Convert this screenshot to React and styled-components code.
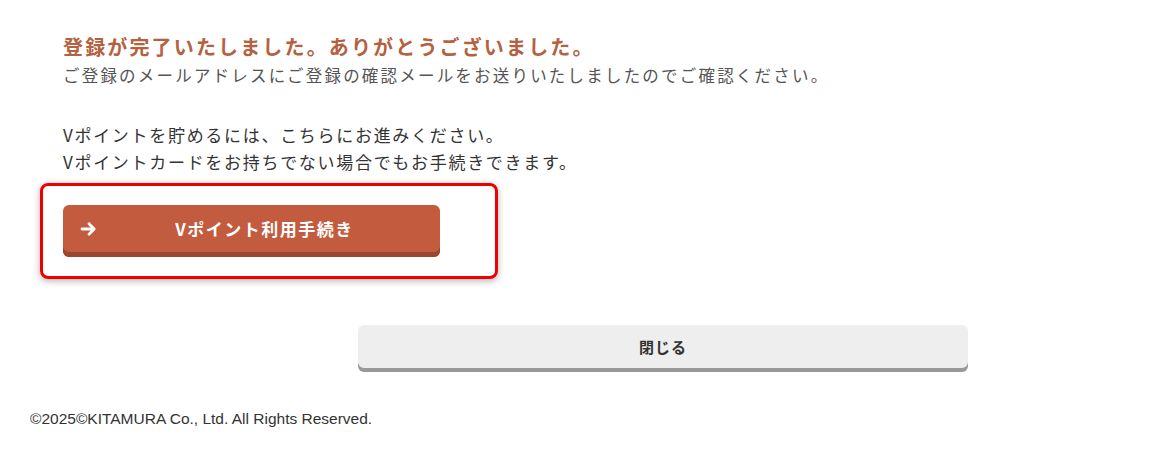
import styled, { createGlobalStyle } from "styled-components";

const GlobalStyle = createGlobalStyle`
  body {
    margin: 0;
    background: #fff;
    font-family: "Noto Sans CJK JP", "Noto Sans", sans-serif;
    color: #333;
  }
`;

const Page = styled.div`
  width: 1153px;
  min-height: 455px;
  display: flex;
  flex-direction: column;
`;

const Main = styled.main`
  padding: 33px 0 0 63px;
  display: flex;
  flex-direction: column;
`;

const Title = styled.h1`
  margin: 0;
  font-size: 20px;
  line-height: 28px;
  font-weight: 700;
  letter-spacing: 2.15px;
  color: #b5603f;
`;

const Lead = styled.p`
  margin: 0;
  font-size: 16.5px;
  line-height: 28px;
  letter-spacing: 2.2px;
  color: #555;
`;

const Note = styled.p`
  margin: 32px 0 0;
  font-size: 17px;
  line-height: 27px;
  letter-spacing: 1.7px;
  color: #333;
`;

const Highlight = styled.div`
  margin: 8px 0 0 -23px;
  width: 458px;
  box-sizing: border-box;
  padding: 19px 0 19px 20px;
  border: 3px solid #ee0000;
  border-radius: 8px;
  box-shadow: 0 2px 7px rgba(0, 0, 0, 0.3);
`;

const PrimaryButton = styled.button`
  width: 377px;
  height: 52px;
  box-sizing: border-box;
  padding: 0 8px 5px 17px;
  display: flex;
  align-items: center;
  border: none;
  border-radius: 6px;
  background: #c35b3f;
  box-shadow: inset 0 -5px 0 #9c452f;
  color: #fff;
  font-family: inherit;
  font-size: 17px;
  font-weight: 700;
  cursor: pointer;

  span {
    flex: 1;
    text-align: center;
    letter-spacing: 1.5px;
  }
`;

const CloseButton = styled.button`
  margin: 46px 0 0 295px;
  width: 610px;
  height: 47px;
  box-sizing: border-box;
  padding: 0 0 4px;
  border: none;
  border-radius: 6px;
  background: #eeeeee;
  box-shadow: inset 0 -4px 0 #999;
  color: #333;
  font-family: inherit;
  font-size: 15px;
  font-weight: 700;
  letter-spacing: 1px;
  cursor: pointer;
`;

const Footer = styled.footer`
  margin-top: 36px;
  padding-left: 30px;
  font-family: "Liberation Sans", Arial, sans-serif;
  font-size: 15.5px;
  line-height: 22px;
  color: #333;
`;

function ArrowIcon() {
  return (
    <svg width="17" height="16" viewBox="0 0 17 16" fill="none">
      <path
        d="M2 8h12M9 2.8l5.2 5.2L9 13.2"
        stroke="#fff"
        strokeWidth="2.8"
        strokeLinecap="round"
        strokeLinejoin="round"
      />
    </svg>
  );
}

export default function App() {
  return (
    <Page>
      <GlobalStyle />
      <Main>
        <Title>登録が完了いたしました。ありがとうございました。</Title>
        <Lead>
          ご登録のメールアドレスにご登録の確認メールをお送りいたしましたのでご確認ください。
        </Lead>
        <Note>
          Vポイントを貯めるには、こちらにお進みください。
          <br />
          Vポイントカードをお持ちでない場合でもお手続きできます。
        </Note>
        <Highlight>
          <PrimaryButton type="button">
            <ArrowIcon />
            <span>Vポイント利用手続き</span>
          </PrimaryButton>
        </Highlight>
        <CloseButton type="button">閉じる</CloseButton>
      </Main>
      <Footer>©2025©KITAMURA Co., Ltd. All Rights Reserved.</Footer>
    </Page>
  );
}
